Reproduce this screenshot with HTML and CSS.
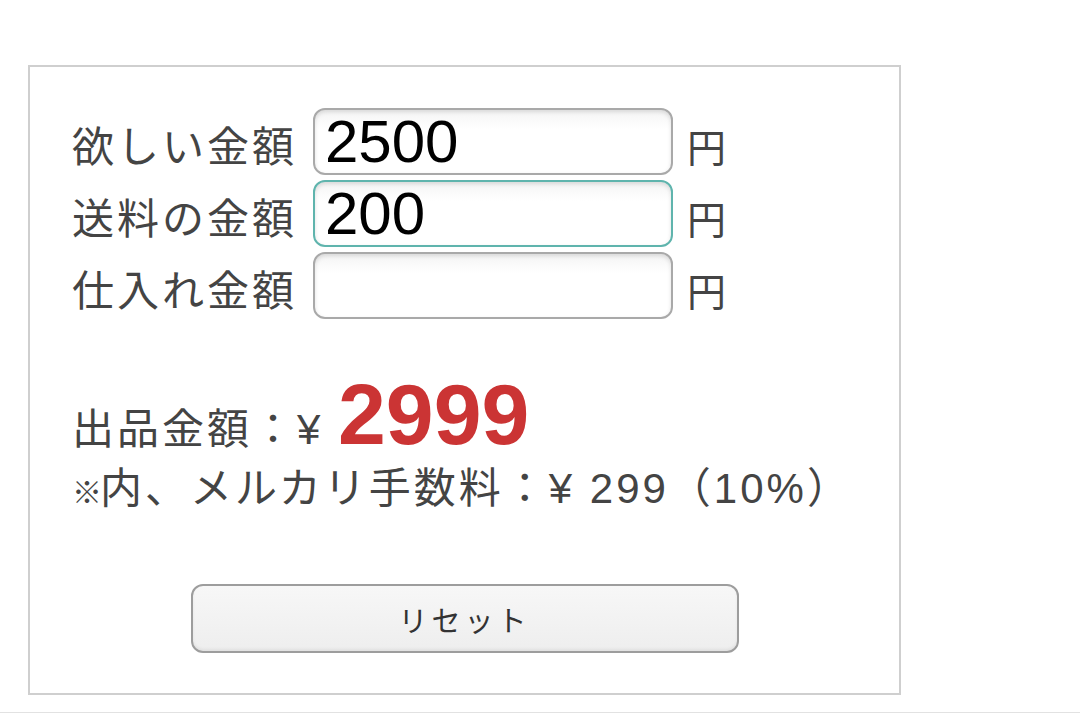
FILE: index.html
```html
<!DOCTYPE html>
<html lang="ja">
<head>
    <meta charset="UTF-8">
    <meta name="viewport" content="width=device-width, initial-scale=1.0">
    <title>メルカリ 出品金額計算</title>
    <link rel="stylesheet" href="styles.css">
</head>
<body>
    <div class="calc-box">
        <div class="field-row">
            <label class="field-label" for="wantPrice">欲しい金額</label>
            <input class="field-input" id="wantPrice" type="text" value="2500">
            <span class="field-unit">円</span>
        </div>
        <div class="field-row">
            <label class="field-label" for="shipping">送料の金額</label>
            <input class="field-input focused" id="shipping" type="text" value="200">
            <span class="field-unit">円</span>
        </div>
        <div class="field-row">
            <label class="field-label" for="cost">仕入れ金額</label>
            <input class="field-input" id="cost" type="text" value="">
            <span class="field-unit">円</span>
        </div>

        <div class="result">
            <p class="result-price">出品金額：¥ <span class="price-value">2999</span></p>
            <p class="result-fee"><span class="note-mark">※</span>内、メルカリ手数料：¥ 299（10%）</p>
        </div>

        <div class="reset-wrap">
            <button class="reset-btn" type="button">リセット</button>
        </div>
    </div>
    <div class="page-rule"></div>
</body>
</html>
```

FILE: styles.css
```css
body {
    margin: 0;
    padding-top: 65px;
    background-color: #fff;
    font-family: 'Liberation Sans', 'Noto Sans CJK JP', sans-serif;
    color: #444;
}
.calc-box {
    width: 873px;
    margin-left: 28px;
    padding: 41px 0 40px 42px;
    box-sizing: border-box;
    border: 2px solid #cfcfcf;
}
.field-row {
    display: flex;
    align-items: baseline;
    margin-bottom: 5px;
}
.field-label {
    width: 241px;
    font-size: 42px;
    letter-spacing: 3px;
    white-space: nowrap;
}
.field-input {
    width: 360px;
    height: 67px;
    box-sizing: border-box;
    padding: 0 10px;
    font-family: 'Liberation Sans', sans-serif;
    font-size: 60px;
    color: #000;
    background: linear-gradient(#f4f4f4, #fff 30%);
    border: 2px solid #a9a9a9;
    border-radius: 12px;
    box-shadow: inset 0 2px 4px rgba(0, 0, 0, 0.12);
    outline: none;
}
.field-input.focused {
    border-color: #5fb4ad;
}
.field-unit {
    margin-left: 14px;
    font-size: 39px;
}
.result {
    margin-top: 52px;
}
.result p {
    margin: 0;
    font-size: 42px;
    letter-spacing: 3px;
    white-space: nowrap;
}
.result .result-price {
    line-height: 86px;
}
.price-value {
    font-size: 86px;
    font-weight: bold;
    letter-spacing: 0;
    color: #cb3434;
}
.result .result-fee {
    margin-top: -12px;
    line-height: 56px;
}
.note-mark {
    font-size: 30px;
    font-weight: bold;
    letter-spacing: -2px;
}
.reset-wrap {
    display: flex;
    justify-content: center;
    margin-top: 63px;
    padding-right: 42px;
}
.reset-btn {
    width: 548px;
    height: 69px;
    font-family: 'Noto Sans CJK JP', sans-serif;
    font-size: 29px;
    letter-spacing: 4px;
    color: #333;
    background: linear-gradient(#f7f7f7, #eeeeee);
    border: 2px solid #9d9d9d;
    border-radius: 12px;
    box-shadow: inset 0 -2px 3px rgba(0, 0, 0, 0.06);
    cursor: pointer;
}
.page-rule {
    margin-top: 17px;
    border-top: 2px solid #e2e2e2;
}
```
